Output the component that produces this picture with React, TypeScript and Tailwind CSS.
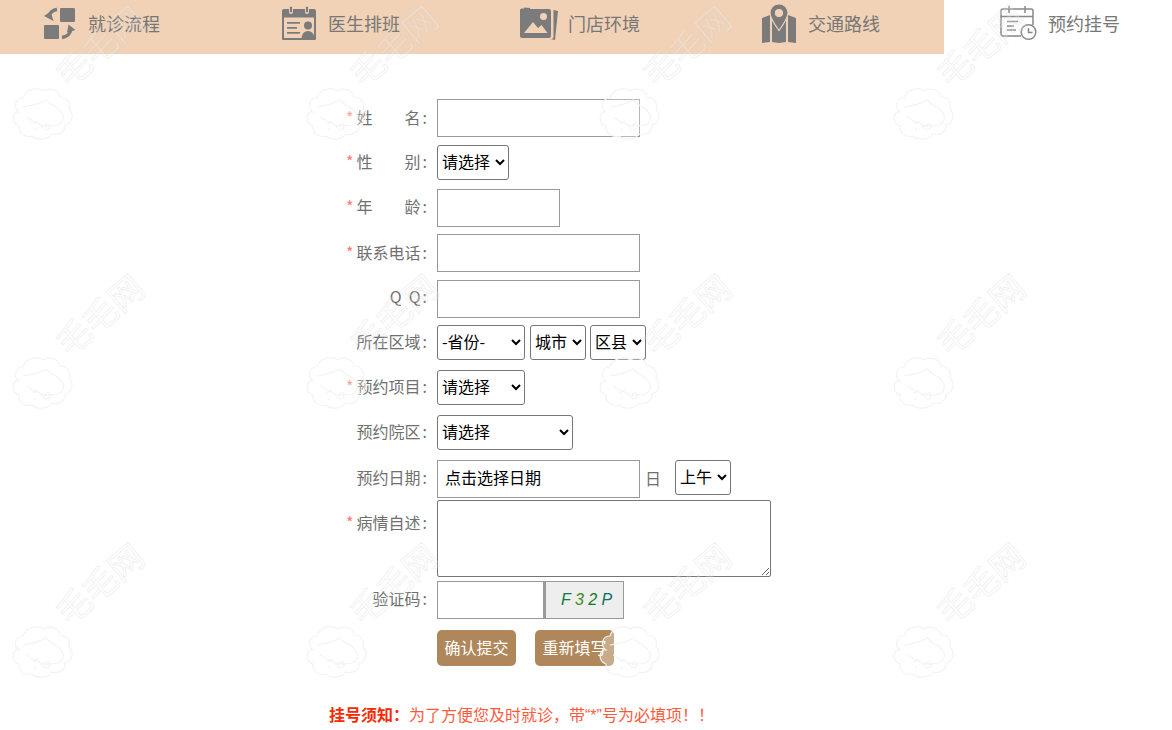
import { FC, ReactNode } from "react";

const FONT = "font-['Microsoft_YaHei','Noto_Sans_CJK_SC','Liberation_Sans',sans-serif]";

const FlowIcon = () => (
    <svg width="34" height="34" viewBox="0 0 34 34" fill="#7b7b7b">
        <rect x="18" y="2" width="15" height="14" rx="1" />
        <rect x="2" y="19" width="15" height="14" rx="1" />
        <path d="M15 3.500C11 4 8 6.500 7 10" fill="none" stroke="#7b7b7b" strokeWidth="3.400" />
        <path d="M2 10l6.500-4.500 3 9.500z" />
        <path d="M20 31.500c4-.5 8-3 9-8.500" fill="none" stroke="#7b7b7b" strokeWidth="3.400" />
        <path d="M33.500 24l-7-5.500-1.500 8z" />
    </svg>
);

const ScheduleIcon = () => (
    <svg width="36" height="36" viewBox="0 0 36 36">
        <path fill="#7b7b7b" d="M3 4h5v3a2 2 0 0 0 4 0V4h12v3a2 2 0 0 0 4 0V4h5a2 2 0 0 1 2 2v28a1 1 0 0 1-1 1H2a1 1 0 0 1-1-1V6a2 2 0 0 1 2-2z" />
        <rect x="8.500" y="1" width="3" height="7" rx="1.500" fill="#7b7b7b" stroke="#f1d2b6" />
        <rect x="24.500" y="1" width="3" height="7" rx="1.500" fill="#7b7b7b" stroke="#f1d2b6" />
        <rect x="3" y="12.500" width="30" height="20.500" fill="#f1d2b6" />
        <path d="M6 17h13v1.800H6zM6 22h10v1.800H6zM6 27h13v1.800H6z" fill="#7b7b7b" />
        <circle cx="27" cy="20.500" r="4" fill="#7b7b7b" />
        <path d="M20.500 35c0-5.500 2-9 6.500-9s6.500 3.500 6.500 9z" fill="#7b7b7b" />
    </svg>
);

const PhotoIcon = () => (
    <svg width="38" height="36" viewBox="0 0 38 36">
        <path fill="#7b7b7b" d="M33.500 5l4.500 1-3 29-5-1h2a2 2 0 0 0 1.500-2z" />
        <path fill="#7b7b7b" d="M4 3.500V2.500l6 .5v1h19a2 2 0 0 1 2 2V31a2 2 0 0 1-2 2H2a2 2 0 0 1-2-2V6a2 2 0 0 1 2-2.500z" />
        <circle cx="23.500" cy="11.500" r="3.500" fill="#f1d2b6" />
        <path fill="#f1d2b6" d="M4 28l9-11 5 6 3.500-3 6 8z" />
    </svg>
);

const MapIcon = () => (
    <svg width="36" height="40" viewBox="0 0 36 40" fill="#7b7b7b">
        <path d="M1 15l8-3v27l-8 1zM11 14l7 14 7-14v25l-7 1-7-1zM27 12l8 3v25l-8-1z" />
        <path fillRule="evenodd" stroke="#f1d2b6" strokeWidth="1.200" d="M18 1c5.500 0 9 4 9 9 0 5-5 12-9 17.500C14 22 9 15 9 10c0-5 3.500-9 9-9zm0 5.500a3.500 3.500 0 1 0 0 7 3.500 3.500 0 0 0 0-7z" />
    </svg>
);

const BookIcon = () => (
    <svg width="38" height="36" viewBox="0 0 38 36" fill="none" stroke="#888" strokeWidth="1.500">
        <path d="M21 31H3a2 2 0 0 1-2-2V6a2 2 0 0 1 2-2h28a2 2 0 0 1 2 2v14" />
        <path d="M1 11.500h32M9 1v7M25 1v7" />
        <path d="M7 16.500h11M7 21h7M7 25h9" />
        <circle cx="28.500" cy="27" r="7.300" />
        <path d="M28.500 23v4.500h4" />
    </svg>
);

const tabs: { label: string; icon: ReactNode; active?: boolean }[] = [
    { label: "就诊流程", icon: <FlowIcon /> },
    { label: "医生排班", icon: <ScheduleIcon /> },
    { label: "门店环境", icon: <PhotoIcon /> },
    { label: "交通路线", icon: <MapIcon /> },
    { label: "预约挂号", icon: <BookIcon />, active: true },
];

const Cloud = () => (
    <svg width="66" height="62" viewBox="0 0 66 62" fill="rgba(255,255,255,0.3)" stroke="#f3f3f3" strokeWidth="1.200" className="absolute left-[11px] top-[84px]">
        <path d="M8 28C2 24 4 14 12 14c2-8 14-12 20-7 6-4 16-1 17 6 7 0 11 6 9 12 5 5 4 14-4 16 1 7-7 11-13 9-4 6-15 7-20 2-7 2-14-3-13-10-6-2-8-9-3-14z" />
        <path fill="none" d="M12 23c8-1 16-3 23-7 3 2 4 5 8 6 4 2 7 5 9 9 1 4 0 8-5 10-6 1-12 2-16 0" />
        <path fill="none" d="M15 33c4 1 7 6 12 6 4 2 5 6 8 7 4 0 5-4 3-6-3-1-5 2-3 3M22 40l5-3M23 47l2-3" />
    </svg>
);

const Watermark = () => (
    <div className="pointer-events-none absolute inset-0 grid auto-rows-[269px] grid-cols-[repeat(4,293.5px)] overflow-hidden">
        {Array.from({ length: 12 }).map((_, i) => (
            <div key={i} className="relative">
                <span className="absolute left-[48px] top-[24px] -rotate-[40deg] text-[34px] leading-[42px] whitespace-nowrap text-white/20 [-webkit-text-stroke:1px_rgba(205,205,205,0.28)]">
                    毛毛网
                </span>
                <Cloud />
            </div>
        ))}
    </div>
);

interface RowProps {
    label?: ReactNode;
    required?: boolean;
    rowHeight: string;
    labelHeight: string;
    children: ReactNode;
}

// label column keeps the star in its own slot so the text lines up
const Row: FC<RowProps> = ({ label, required, rowHeight, labelHeight, children }) => (
    <div className={`flex items-start ${rowHeight}`}>
        <div className={`ml-[346px] flex w-[91px] text-base text-[#707070] ${labelHeight}`}>
            <span className="w-[10.5px] text-[#f77]">{required ? "*" : ""}</span>
            <span className="w-[64px]">{label}</span>
            <span className="ml-[2px]">:</span>
        </div>
        {children}
    </div>
);

const Spread: FC<{ a: string; b: string }> = ({ a, b }) => (
    <span className="flex justify-between">
        <span>{a}</span>
        <span>{b}</span>
    </span>
);

const inputCls = "h-[38px] border border-[#999] bg-transparent text-base text-black outline-none";
const selectCls = "h-[35px] rounded-[3px] border border-[#767676] bg-white pb-[4px] text-base text-black";

export default function App() {
    return (
        <div className={`relative h-[730px] w-full overflow-hidden bg-white ${FONT}`}>
            <nav className="-ml-4 flex h-[54px] w-[1200px]">
                {tabs.map((tab) => (
                    <a key={tab.label} className={`flex w-[240px] items-center pb-[8px] pl-[54px] text-lg ${tab.active ? "bg-white" : "bg-[#f1d2b6]"} text-[#777]`}>
                        <span className="mr-[8px] flex w-[42px] justify-center">{tab.icon}</span>
                        {tab.label}
                    </a>
                ))}
            </nav>

            <form className="flex flex-col pt-[45px]">
                <Row required label={<Spread a="姓" b="名" />} rowHeight="h-[46px]" labelHeight="leading-[36px]">
                    <input className={`${inputCls} w-[203px]`} />
                </Row>
                <Row required label={<Spread a="性" b="别" />} rowHeight="h-[44px]" labelHeight="leading-[33px]">
                    <select className={`${selectCls} w-[72px]`}>
                        <option>请选择</option>
                    </select>
                </Row>
                <Row required label={<Spread a="年" b="龄" />} rowHeight="h-[45px]" labelHeight="leading-[34px]">
                    <input className={`${inputCls} w-[123px]`} />
                </Row>
                <Row required label="联系电话" rowHeight="h-[46px]" labelHeight="leading-[36px]">
                    <input className={`${inputCls} w-[203px]`} />
                </Row>
                <Row label={<span className="flex justify-end gap-[7px]"><span>Q</span><span>Q</span></span>} rowHeight="h-[45px]" labelHeight="leading-[33px]">
                    <input className={`${inputCls} w-[203px]`} />
                </Row>
                <Row label="所在区域" rowHeight="h-[45px]" labelHeight="leading-[33px]">
                    <div className="flex">
                        <select className={`${selectCls} w-[88px]`}>
                            <option>-省份-</option>
                        </select>
                        <select className={`${selectCls} ml-[5px] w-[56px]`}>
                            <option>城市</option>
                        </select>
                        <select className={`${selectCls} ml-[4px] w-[56px]`}>
                            <option>区县</option>
                        </select>
                    </div>
                </Row>
                <Row required label="预约项目" rowHeight="h-[45px]" labelHeight="leading-[33px]">
                    <select className={`${selectCls} w-[88px]`}>
                        <option>请选择</option>
                    </select>
                </Row>
                <Row label="预约院区" rowHeight="h-[45px]" labelHeight="leading-[33px]">
                    <select className={`${selectCls} w-[136px]`}>
                        <option>请选择</option>
                    </select>
                </Row>
                <Row label="预约日期" rowHeight="h-[40px]" labelHeight="leading-[34px]">
                    <input readOnly defaultValue="点击选择日期" className={`${inputCls} w-[203px] pb-[4px] pl-[7px]`} />
                    <span className="ml-[5px] w-[30px] text-base leading-[36px] text-[#707070]">日</span>
                    <select className={`${selectCls} w-[56px]`}>
                        <option>上午</option>
                    </select>
                </Row>
                <Row required label="病情自述" rowHeight="h-[81px]" labelHeight="leading-[44px]">
                    <textarea className="h-[77px] w-[334px] rounded-[2px] border border-[#767676] bg-transparent" />
                </Row>
                <Row label={<span className="block text-right">验证码</span>} rowHeight="h-[49px]" labelHeight="leading-[34px]">
                    <input className={`${inputCls} w-[107px]`} />
                    <div className="flex h-[38px] w-[80px] items-center border border-l-2 border-[#999] bg-[#eee] pl-[15px] font-['Liberation_Sans',sans-serif] text-base italic tracking-[3.3px]">
                        <span className="text-[#0a7d3c]">F</span>
                        <span className="ml-[1px] text-[#3c8a12]">3</span>
                        <span className="ml-[1px] text-[#0f7a1c]">2</span>
                        <span className="ml-[1px] text-[#0a6f66]">P</span>
                    </div>
                </Row>
                <div className="ml-[437px] flex gap-[19px]">
                    <button type="button" className="h-[36px] w-[79px] rounded-[5px] bg-[#b0875a] pb-[2px] text-base text-white">确认提交</button>
                    <button type="button" className="h-[36px] w-[79px] rounded-[5px] bg-[#b0875a] pb-[2px] text-base text-white">重新填写</button>
                </div>
            </form>

            <p className="mt-[36px] ml-[329px] text-base leading-6 text-[#ff5a3c]">
                <b className="text-[#f52a00]">挂号须知：</b>为了方便您及时就诊，带<span className="font-['Liberation_Sans',sans-serif]">“*”</span>号为必填项！！
            </p>

            <Watermark />
        </div>
    );
}
